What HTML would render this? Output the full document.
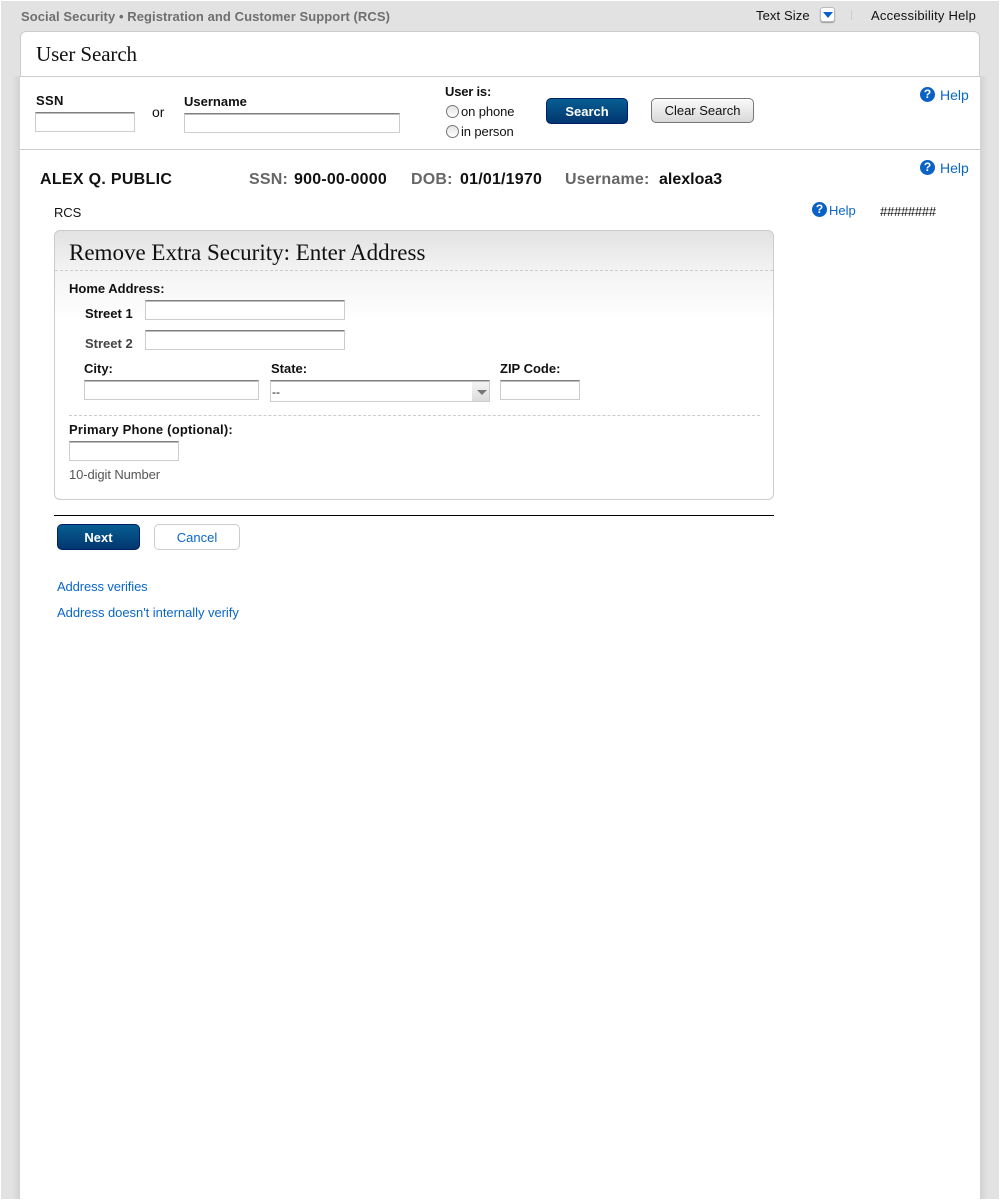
<!DOCTYPE html>
<html lang="en">
<head>
<meta charset="utf-8">
<title>User Search</title>
<style>
html,body{margin:0;padding:0;background:#fff;}
#p{position:relative;width:1000px;height:1200px;overflow:hidden;background:#fff;font-family:"Liberation Sans",Arial,sans-serif;font-size:13px;color:#111;}
#p div,#p span.a,#p a{position:absolute;white-space:nowrap;}
a{color:#0a66c8;text-decoration:none;}
.t{line-height:17px;}
.b{font-weight:bold;}
.i{box-sizing:border-box;background:#fff;border:1px solid #ccc;border-top:1px solid #808080;box-shadow:inset 0 1px 0 #bdbdbd;}
.srf{font-family:"Liberation Serif",Georgia,serif;color:#111;}
.blue{box-sizing:border-box;background:linear-gradient(#065e92,#02366f);border:1px solid #021f66;border-radius:5px;color:#fff;font-weight:bold;text-align:center;}
.r{box-sizing:border-box;width:13px;height:13px;border:1px solid #777;border-radius:50%;background:linear-gradient(#e4e4e4,#fff);}
.q{width:15px;height:15px;border-radius:50%;background:#0a62c4;color:#fff;font-weight:bold;font-size:12px;line-height:15px;text-align:center;}
.h{font-size:14px;line-height:17px;color:#0a66c8;}
.l{font-size:16px;line-height:19px;font-weight:bold;letter-spacing:.2px;}
</style>
</head>
<body>
<div id="p">
<div style="left:1px;top:1px;width:998px;height:1198px;background:#e2e2e2;"></div>
<div style="left:12px;top:76px;width:8px;height:1123px;background:linear-gradient(90deg,#e2e2e2,#d2d2d2);"></div>
<div style="left:980px;top:76px;width:8px;height:1123px;background:linear-gradient(90deg,#d2d2d2,#e2e2e2);"></div>
<div style="left:20px;top:31px;width:960px;height:46px;box-sizing:border-box;background:#fff;border:1px solid #ccc;border-bottom:0;border-radius:6px 6px 0 0;"></div>
<div style="left:20px;top:76px;width:960px;height:1123px;background:#fff;"></div>
<div style="left:20px;top:76px;width:960px;height:1px;background:#ccc;"></div>
<div style="left:20px;top:149px;width:960px;height:1px;background:#ccc;"></div>

<div class="t b" style="left:21px;top:8px;color:#6f6f6f;letter-spacing:.07px;">Social Security • Registration and Customer Support (RCS)</div>
<div class="t" style="left:756px;top:7px;letter-spacing:.1px;">Text Size</div>
<div style="left:820px;top:7px;width:15px;height:15px;box-sizing:border-box;background:#fff;border:1px solid #bbb;border-radius:3px;box-shadow:0 1px 1px #999;"></div>
<div style="left:823px;top:12px;width:0;height:0;border-left:5px solid transparent;border-right:5px solid transparent;border-top:6px solid #0a62c4;"></div>
<div style="left:851px;top:10px;width:1px;height:10px;background:#ccc;"></div>
<div class="t" style="left:871px;top:7px;letter-spacing:.22px;">Accessibility Help</div>

<div class="srf" style="left:36px;top:42px;font-size:21px;line-height:24px;letter-spacing:-.1px;">User Search</div>

<div class="t b" style="left:36px;top:92px;letter-spacing:.3px;">SSN</div>
<div class="i" style="left:35px;top:112px;width:100px;height:20px;"></div>
<div class="t" style="left:152px;top:104px;font-size:14px;">or</div>
<div class="t b" style="left:184px;top:93px;">Username</div>
<div class="i" style="left:184px;top:113px;width:216px;height:20px;"></div>
<div class="t b" style="left:445px;top:83px;letter-spacing:-.2px;">User is:</div>
<div class="r" style="left:446px;top:105px;"></div>
<div class="t" style="left:461px;top:103px;letter-spacing:-.1px;">on phone</div>
<div class="r" style="left:446px;top:125px;"></div>
<div class="t" style="left:461px;top:123px;letter-spacing:-.1px;">in person</div>
<div class="blue" style="left:546px;top:98px;width:82px;height:26px;line-height:25px;font-size:13px;">Search</div>
<div style="left:651px;top:98px;width:103px;height:25px;box-sizing:border-box;background:linear-gradient(#fafafa,#d8d8d8);border:1px solid #777;border-radius:5px;text-align:center;line-height:23px;font-size:13px;">Clear Search</div>
<div class="q" style="left:920px;top:87px;">?</div>
<div class="h" style="left:940px;top:87px;">Help</div>

<div class="l" style="left:40px;top:170px;letter-spacing:.3px;">ALEX Q. PUBLIC</div>
<div class="l" style="left:249px;top:170px;color:#666;">SSN:</div>
<div class="l" style="left:294px;top:170px;">900-00-0000</div>
<div class="l" style="left:411px;top:170px;color:#666;">DOB:</div>
<div class="l" style="left:460px;top:170px;">01/01/1970</div>
<div class="l" style="left:565px;top:170px;color:#666;">Username:</div>
<div class="l" style="left:659px;top:170px;letter-spacing:0;">alexloa3</div>
<div class="q" style="left:920px;top:160px;">?</div>
<div class="h" style="left:940px;top:160px;">Help</div>

<div class="t" style="left:54px;top:204px;letter-spacing:-.1px;">RCS</div>
<div class="q" style="left:812px;top:202px;">?</div>
<div class="t" style="left:829px;top:202px;color:#0a66c8;">Help</div>
<div class="t" style="left:880px;top:203px;letter-spacing:-.25px;">########</div>

<div style="left:54px;top:230px;width:720px;height:270px;box-sizing:border-box;border:1px solid #ccc;border-radius:6px;background:linear-gradient(#e2e2e2 0,#f3f3f3 40px,#fff 90px);"></div>
<div class="srf" style="left:69px;top:240px;font-size:23px;line-height:26px;">Remove Extra Security: Enter Address</div>
<div style="left:55px;top:270px;width:718px;height:0;border-top:1px dashed #ccc;"></div>

<div class="t b" style="left:69px;top:280px;">Home Address:</div>
<div class="t b" style="left:85px;top:305px;">Street 1</div>
<div class="i" style="left:145px;top:300px;width:200px;height:20px;"></div>
<div class="t b" style="left:85px;top:335px;color:#444;">Street 2</div>
<div class="i" style="left:145px;top:330px;width:200px;height:20px;"></div>
<div class="t b" style="left:84px;top:360px;">City:</div>
<div class="i" style="left:84px;top:380px;width:175px;height:20px;"></div>
<div class="t b" style="left:271px;top:360px;">State:</div>
<div class="i" style="left:270px;top:380px;width:220px;height:22px;"></div>
<div class="t" style="left:272px;top:384px;font-size:12px;">--</div>
<div style="left:472px;top:382px;width:17px;height:19px;background:linear-gradient(#f4f4f4,#dcdcdc);"></div>
<div style="left:477px;top:390px;width:0;height:0;border-left:5px solid transparent;border-right:5px solid transparent;border-top:5px solid #777;"></div>
<div class="t b" style="left:500px;top:360px;">ZIP Code:</div>
<div class="i" style="left:500px;top:380px;width:80px;height:20px;"></div>
<div style="left:69px;top:415px;width:691px;height:0;border-top:1px dashed #ccc;"></div>
<div class="t b" style="left:69px;top:421px;letter-spacing:.2px;">Primary Phone (optional):</div>
<div class="i" style="left:69px;top:441px;width:110px;height:20px;"></div>
<div class="t" style="left:69px;top:466px;color:#555;letter-spacing:-.1px;">10-digit Number</div>

<div style="left:54px;top:515px;width:720px;height:1px;background:#000;"></div>
<div class="blue" style="left:57px;top:524px;width:83px;height:26px;line-height:25px;font-size:13px;">Next</div>
<div style="left:154px;top:524px;width:86px;height:26px;box-sizing:border-box;background:#fff;border:1px solid #ccc;border-radius:5px;text-align:center;line-height:25px;color:#0a66c8;">Cancel</div>
<a class="t" href="#" style="left:57px;top:578px;letter-spacing:-.12px;">Address verifies</a>
<a class="t" href="#" style="left:57px;top:604px;letter-spacing:-.04px;">Address doesn't internally verify</a>
</div>
</body>
</html>
